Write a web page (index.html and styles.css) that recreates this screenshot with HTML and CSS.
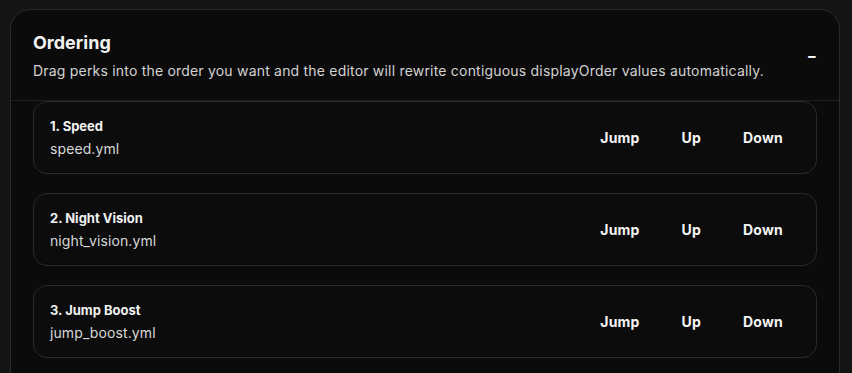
FILE: index.html
```html
<!DOCTYPE html>
<html lang="en">
<head>
  <meta charset="UTF-8">
  <meta name="viewport" content="width=device-width, initial-scale=1.0">
  <title>Ordering</title>
  <link rel="stylesheet" href="styles.css">
</head>
<body>
  <section class="panel">
    <div class="panel-head">
      <div>
        <h2>Ordering</h2>
        <p>Drag perks into the order you want and the editor will rewrite contiguous displayOrder values automatically.</p>
      </div>
      <button class="collapse">&minus;</button>
    </div>

    <div class="perk-list">
      <div class="perk">
        <div class="perk-info">
          <strong>1. Speed</strong>
          <span>speed.yml</span>
        </div>
        <div class="perk-actions">
          <button>Jump</button>
          <button>Up</button>
          <button>Down</button>
        </div>
      </div>

      <div class="perk">
        <div class="perk-info">
          <strong>2. Night Vision</strong>
          <span>night_vision.yml</span>
        </div>
        <div class="perk-actions">
          <button>Jump</button>
          <button>Up</button>
          <button>Down</button>
        </div>
      </div>

      <div class="perk">
        <div class="perk-info">
          <strong>3. Jump Boost</strong>
          <span>jump_boost.yml</span>
        </div>
        <div class="perk-actions">
          <button>Jump</button>
          <button>Up</button>
          <button>Down</button>
        </div>
      </div>
    </div>
  </section>
</body>
</html>
```

FILE: styles.css
```css
body {
  background-color: #141414;
  font-family: 'Inter', 'DejaVu Sans', sans-serif;
  color: #f2f2f2;
  margin: 0;
  padding: 9px 12px 0 10px;
  overflow: hidden;
}
.panel {
  background-color: #0b0b0b;
  border: 1px solid #2a2a2a;
  border-radius: 20px;
  height: 420px;
}
.panel-head {
  display: flex;
  justify-content: space-between;
  align-items: center;
  padding: 22px 22px 21px 22px;
  border-bottom: 1px solid #1f1f1f;
}
.panel-head h2 {
  font-size: 18px;
  font-weight: 700;
  margin: 0 0 9px 0;
}
.panel-head p {
  font-size: 14px;
  letter-spacing: 0.2px;
  color: #d2d2d2;
  margin: 0;
}
.collapse {
  background: none;
  border: none;
  color: #fff;
  font-size: 15px;
  font-weight: 700;
  font-family: inherit;
  padding: 0;
  margin-top: -1px;
  cursor: pointer;
}
.perk-list {
  display: flex;
  flex-direction: column;
  gap: 19px;
  padding: 0 22px;
}
.perk {
  display: flex;
  justify-content: space-between;
  align-items: center;
  height: 71px;
  padding: 0 33px 0 16px;
  border: 1px solid #2a2a2a;
  border-radius: 14px;
  background-color: #0c0c0c;
}
.perk-info {
  display: flex;
  flex-direction: column;
  gap: 6px;
}
.perk-info strong {
  font-size: 13px;
  font-weight: 700;
}
.perk-info span {
  font-size: 14px;
  letter-spacing: 0.1px;
  color: #d8d8d8;
}
.perk-actions {
  display: flex;
  gap: 42px;
}
.perk-actions button {
  background: none;
  border: none;
  color: #f4f4f4;
  font-family: inherit;
  font-size: 14px;
  font-weight: 700;
  letter-spacing: 0.2px;
  padding: 0;
  cursor: pointer;
}
```
